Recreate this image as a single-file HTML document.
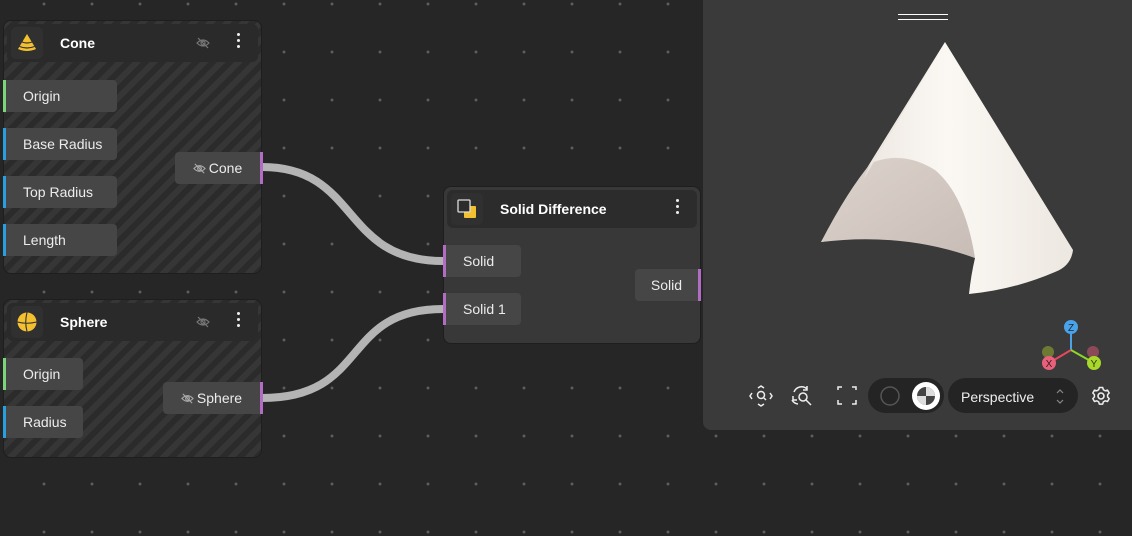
<!DOCTYPE html>
<html><head><meta charset="utf-8"><style>
*{box-sizing:border-box;margin:0;padding:0}
body{width:1132px;height:536px;overflow:hidden;background:#262626;font-family:"Liberation Sans",sans-serif;position:relative;
background-image:radial-gradient(circle,#5c5c5c 1.3px,transparent 1.6px);background-size:48px 48px;background-position:20px -20px}
.node{position:absolute;border-radius:8px;border:1px solid #1e1e1e;background:#2e2e2e repeating-linear-gradient(-45deg,#2b2b2b 0 6px,#363636 6px 12px);overflow:visible}
.node.plain{background:#383838}
.hdr{position:absolute;left:3px;right:3px;top:3px;height:38px;background:#2a2a2a;border-radius:6px}
.plain .hdr{background:#2c2c2c}
.ico{position:absolute;left:4px;top:3px;width:32px;height:32px;border-radius:5px;background:#303030;display:flex;align-items:center;justify-content:center}
.title{position:absolute;left:53px;top:11px;color:#fff;font-weight:bold;font-size:14px}
.dots{position:absolute;right:17px;top:9px;width:4px}
.dots i{display:block;width:3px;height:3px;background:#eee;border-radius:50%;margin-bottom:3px}
.eye{position:absolute;right:48px;top:12px}
.port{position:absolute;height:32px;background:#464646;border-radius:0 4px 4px 0;color:#ececec;font-size:14px;line-height:32px;padding-left:17px;border-left:3px solid}
.out{position:absolute;height:32px;background:#464646;border-radius:4px 0 0 4px;color:#ececec;font-size:14px;line-height:32px;text-align:center;border-right:3px solid #b26cc4}
.out svg{vertical-align:-2px;margin-right:3px}
.vp{position:absolute;left:703px;top:0;width:429px;height:430px;background:#3a3a3a;border-radius:0 0 0 8px}
</style></head><body>

<svg style="position:absolute;left:0;top:0" width="1132" height="536">
<path d="M262 167 C360 167 340 261 443 261" stroke="#b4b4b4" stroke-width="8" fill="none"/>
<path d="M262 398 C370 398 340 309 443 309" stroke="#b4b4b4" stroke-width="8" fill="none"/>
</svg>

<!-- Cone node -->
<div class="node" style="left:3px;top:20px;width:259px;height:254px">
<div class="hdr">
 <div class="ico"><svg width="22" height="20" viewBox="0 0 22 20"><path d="M11 1 L20 16 Q11 20 2 16 Z" fill="#f3c030"/><path d="M6 9 Q11 11 16 9 M3.5 13.5 Q11 16.5 18.5 13.5" stroke="#303030" stroke-width="1.2" fill="none"/></svg></div>
 <div class="title">Cone</div>
 <svg class="eye" width="14" height="14" viewBox="0 0 14 14"><path d="M1 7 Q7 1 13 7 Q7 13 1 7Z" stroke="#777" stroke-width="1.2" fill="none"/><circle cx="7" cy="7" r="2" stroke="#777" stroke-width="1.2" fill="none"/><path d="M2 2 L12 12" stroke="#777" stroke-width="1.2"/></svg>
 <div class="dots"><i></i><i></i><i></i></div>
</div>
<div class="port" style="left:-1px;top:59px;width:114px;border-color:#7bd67b">Origin</div>
<div class="port" style="left:-1px;top:107px;width:114px;border-color:#2a9fe0">Base Radius</div>
<div class="port" style="left:-1px;top:155px;width:114px;border-color:#2a9fe0">Top Radius</div>
<div class="port" style="left:-1px;top:203px;width:114px;border-color:#2a9fe0">Length</div>
<div class="out" style="left:171px;top:131px;width:88px"><svg width="13" height="13" viewBox="0 0 14 14"><path d="M1 7 Q7 1 13 7 Q7 13 1 7Z" stroke="#aaa" stroke-width="1.2" fill="none"/><circle cx="7" cy="7" r="2" stroke="#aaa" stroke-width="1.2" fill="none"/><path d="M2 2 L12 12" stroke="#aaa" stroke-width="1.2"/></svg>Cone</div>
</div>

<!-- Sphere node -->
<div class="node" style="left:3px;top:299px;width:259px;height:159px">
<div class="hdr">
 <div class="ico"><svg width="22" height="22" viewBox="0 0 22 22"><circle cx="11" cy="11" r="9.5" fill="#f3c030"/><path d="M1.5 11 Q11 13.5 20.5 11 M11 1.5 Q8.5 11 11 20.5" stroke="#303030" stroke-width="1.1" fill="none"/></svg></div>
 <div class="title">Sphere</div>
 <svg class="eye" width="14" height="14" viewBox="0 0 14 14"><path d="M1 7 Q7 1 13 7 Q7 13 1 7Z" stroke="#777" stroke-width="1.2" fill="none"/><circle cx="7" cy="7" r="2" stroke="#777" stroke-width="1.2" fill="none"/><path d="M2 2 L12 12" stroke="#777" stroke-width="1.2"/></svg>
 <div class="dots"><i></i><i></i><i></i></div>
</div>
<div class="port" style="left:-1px;top:58px;width:80px;border-color:#7bd67b">Origin</div>
<div class="port" style="left:-1px;top:106px;width:80px;border-color:#2a9fe0">Radius</div>
<div class="out" style="left:159px;top:82px;width:100px"><svg width="13" height="13" viewBox="0 0 14 14"><path d="M1 7 Q7 1 13 7 Q7 13 1 7Z" stroke="#aaa" stroke-width="1.2" fill="none"/><circle cx="7" cy="7" r="2" stroke="#aaa" stroke-width="1.2" fill="none"/><path d="M2 2 L12 12" stroke="#aaa" stroke-width="1.2"/></svg>Sphere</div>
</div>

<!-- Solid Difference -->
<div class="node plain" style="left:443px;top:186px;width:258px;height:158px">
<div class="hdr">
 <div class="ico"><svg width="24" height="24" viewBox="0 0 24 24"><rect x="9" y="9" width="12" height="12" rx="1" fill="#f3c030"/><rect x="3" y="3" width="12" height="12" rx="1" fill="#2c2c2c" stroke="#ddd" stroke-width="1.3"/></svg></div>
 <div class="title">Solid Difference</div>
 <div class="dots"><i></i><i></i><i></i></div>
</div>
<div class="port" style="left:-1px;top:58px;width:78px;border-color:#b26cc4">Solid</div>
<div class="port" style="left:-1px;top:106px;width:78px;border-color:#b26cc4">Solid 1</div>
<div class="out" style="left:191px;top:82px;width:66px">Solid</div>
</div>

<!-- Viewport -->
<div class="vp">
<div style="position:absolute;left:195px;top:14px;width:50px;height:6px;border-top:1.5px solid #fff;border-bottom:1.5px solid #fff"></div>
<svg style="position:absolute;left:0;top:0" width="429" height="430">
<defs>
<linearGradient id="cg" x1="0" y1="0" x2="1" y2="0"><stop offset="0" stop-color="#e6dfd9"/><stop offset="0.5" stop-color="#fbf8f3"/><stop offset="1" stop-color="#ede7e1"/></linearGradient>
<linearGradient id="hg" x1="0" y1="0" x2="1" y2="1"><stop offset="0" stop-color="#ddd3cd"/><stop offset="1" stop-color="#c8bcb6"/></linearGradient>
</defs>
<path d="M242 42 L370 250 Q368 266 352 272 Q310 290 266 294 Q268 275 272 258 Q200 230 118 242 Z" fill="url(#cg)"/>
<path d="M168 163 Q200 150 232 170 Q262 195 272 258 Q200 232 118 242 Q145 190 168 163Z" fill="url(#hg)"/>
<path d="M242 42 L168 163 L160 180 Z" fill="#ece6e0"/>
<line x1="368" y1="350" x2="368" y2="328" stroke="#4aa3e8" stroke-width="2"/>
<line x1="368" y1="350" x2="346" y2="363" stroke="#e8485a" stroke-width="2"/>
<line x1="368" y1="350" x2="391" y2="363" stroke="#8ed62a" stroke-width="2"/>
<circle cx="345" cy="352" r="6" fill="#6e7a34"/>
<circle cx="390" cy="352" r="6" fill="#8a4a58"/>
<circle cx="368" cy="327" r="7" fill="#4aa3e8"/>
<circle cx="346" cy="363" r="7" fill="#e8607a"/>
<circle cx="391" cy="363" r="7" fill="#a8d82a"/>
<text x="368" y="331" font-size="10" text-anchor="middle" fill="#1a2a3a" font-family="Liberation Sans">Z</text>
<text x="346" y="367" font-size="10" text-anchor="middle" fill="#3a1a20" font-family="Liberation Sans">X</text>
<text x="391" y="367" font-size="10" text-anchor="middle" fill="#2a3a10" font-family="Liberation Sans">Y</text>
<g stroke="#eee" stroke-width="1.5" fill="none">
<circle cx="58" cy="395" r="3.5"/><path d="M61 398 l2 2 M49 393 l-2 3 2 3 M67 393 l2 3 -2 3 M55 388 l3 -2 3 2 M55 404 l3 2 3 -2"/>
<path d="M91 392 a8 8 0 0 1 13 -3 M104 386 v4 h-4 M89 400 a8 8 0 0 0 6 4 M90 396 v4 h4"/><circle cx="100" cy="397" r="4"/><path d="M103 400 l5 5"/>
<path d="M135 390 v-3 h4 M149 387 h4 v3 M153 400 v4 h-4 M139 404 h-4 v-4"/>
</g>
<rect x="165" y="378" width="76" height="35" rx="17.5" fill="#242424"/>
<circle cx="187" cy="396" r="9" fill="none" stroke="#555" stroke-width="1.5"/>
<circle cx="223" cy="396" r="14" fill="#fff"/>
<circle cx="223" cy="396" r="9" fill="#444"/>
<path d="M223 387 v9 h9 a9 9 0 0 0 -9 -9Z M214 396 h9 v9 a9 9 0 0 1 -9 -9Z" fill="#ddd"/>
<rect x="245" y="378" width="130" height="35" rx="17.5" fill="#242424"/>
<text x="258" y="402" font-size="14" fill="#eee" font-family="Liberation Sans">Perspective</text>
<path d="M354 393 l3 -3 3 3 M354 400 l3 3 3 -3" stroke="#888" stroke-width="1.2" fill="none"/>
<circle cx="398" cy="396" r="3" stroke="#eee" stroke-width="1.6" fill="none"/>
<path d="M396.3 387.5 h3.4 l0.6 2.2 l2 1.1 l2.2 -0.7 l1.7 2.9 l-1.6 1.6 v2.4 l1.6 1.6 l-1.7 2.9 l-2.2 -0.7 l-2 1.1 l-0.6 2.2 h-3.4 l-0.6 -2.2 l-2 -1.1 l-2.2 0.7 l-1.7 -2.9 l1.6 -1.6 v-2.4 l-1.6 -1.6 l1.7 -2.9 l2.2 0.7 l2 -1.1 Z" stroke="#eee" stroke-width="1.5" fill="none" stroke-linejoin="round"/>
</svg>
</div>
</body></html>
